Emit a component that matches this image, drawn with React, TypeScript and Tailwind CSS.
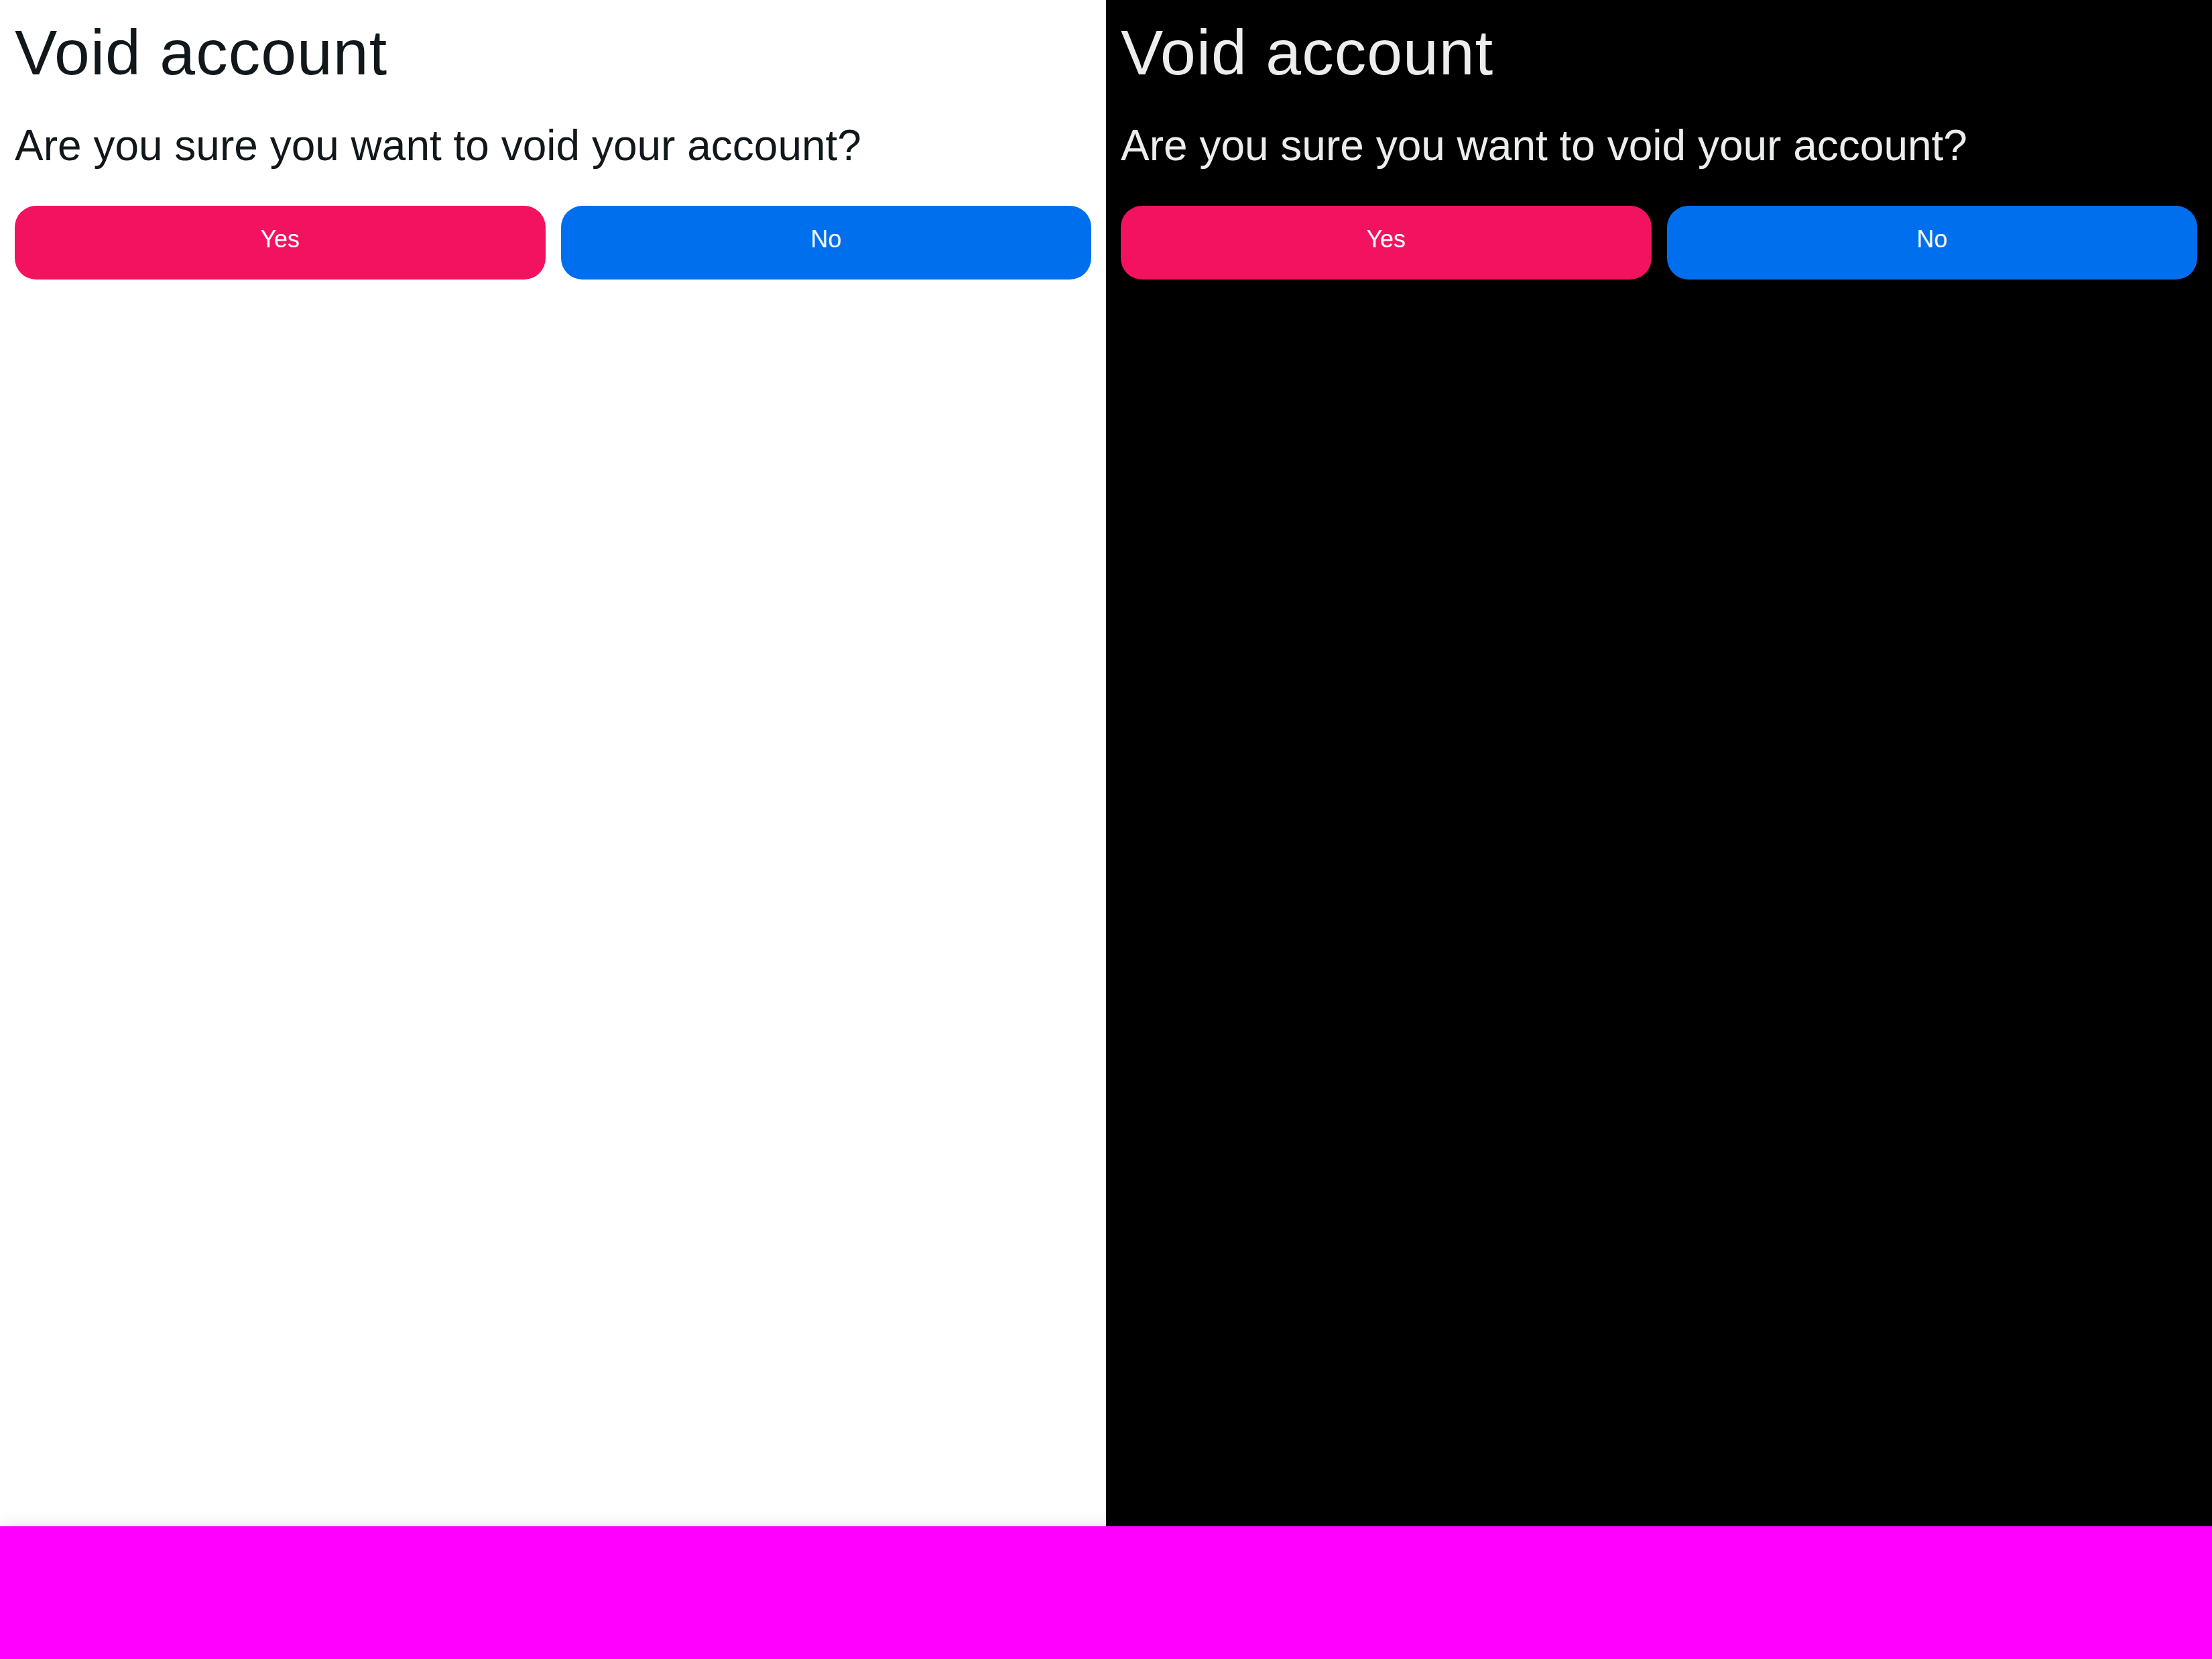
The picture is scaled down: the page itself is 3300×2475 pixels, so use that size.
import React from "react";

type Mode = "light" | "dark";

const Panel = ({ mode }: { mode: Mode }) => {
  const dark = mode === "dark";
  return (
    <div
      className={
        dark
          ? "flex-1 bg-black text-[#ECEDEE] px-[22px] pt-[24px]"
          : "flex-1 bg-white text-[#11181C] px-[22px] pt-[24px]"
      }
    >
      <h1 className="text-[95px] leading-[1.15] font-normal tracking-[1px]">Void account</h1>
      <p className="mt-[48px] text-[64px] leading-[1.15]">Are you sure you want to void your account?</p>
      <div className="mt-[52px] grid grid-cols-2 gap-[23px]">
        <button className="h-[110px] rounded-[32px] bg-[#F31260] text-white text-[36px] flex items-center justify-center pb-[10px]">
          Yes
        </button>
        <button className="h-[110px] rounded-[32px] bg-[#006FEE] text-white text-[36px] flex items-center justify-center pb-[10px]">
          No
        </button>
      </div>
    </div>
  );
};

export default function App() {
  return (
    <div className="w-[3300px] h-[2475px] flex flex-col overflow-hidden" style={{ fontFamily: '"Liberation Sans", Arial, sans-serif' }}>
      <div className="flex h-[2277px]">
        <Panel mode="light" />
        <Panel mode="dark" />
      </div>
      <div className="relative z-10 flex-1 bg-[#ff00ff] shadow-[0_0_24px_rgba(0,0,0,0.12)]" />
    </div>
  );
}
